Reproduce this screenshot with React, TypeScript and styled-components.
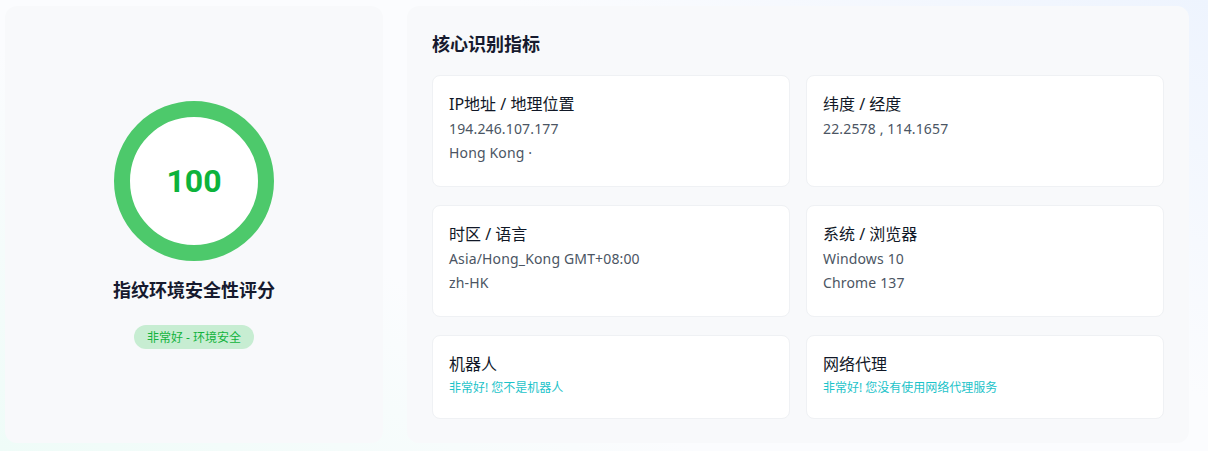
import React from "react";
import styled, { createGlobalStyle } from "styled-components";

const GlobalStyle = createGlobalStyle`
  html, body { margin: 0; padding: 0; }
  body {
    width: 1208px;
    height: 451px;
    overflow: hidden;
    font-family: "Noto Sans", "Noto Sans CJK SC", sans-serif;
    background: linear-gradient(30deg, #effcf8 0%, #fbfcfe 35%, #fbfcfe 65%, #eef4fe 100%);
  }
`;

const Page = styled.div`
  display: grid;
  grid-template-columns: 378px 782px;
  column-gap: 24px;
  padding: 6px 0 0 5px;
  height: 437px;
`;

const ScoreCard = styled.section`
  background: #f8f9fb;
  border-radius: 12px;
  display: flex;
  flex-direction: column;
  align-items: center;
  justify-content: center;
  padding-top: 1px;
`;

const Ring = styled.div`
  width: 160px;
  height: 160px;
  box-sizing: border-box;
  border-radius: 50%;
  border: 16px solid #4dc96b;
  background: #ffffff;
  display: flex;
  align-items: center;
  justify-content: center;
`;

const Score = styled.span`
  font-family: Roboto, "Noto Sans", sans-serif;
  font-size: 32px;
  font-weight: 700;
  color: #0db33b;
  line-height: 1;
`;

const ScoreTitle = styled.h2`
  margin: 15px 0 0;
  font-size: 18px;
  line-height: 28px;
  font-weight: 700;
  color: #161a2e;
`;

const Badge = styled.span`
  margin-top: 21px;
  height: 24px;
  width: 120px;
  border-radius: 12px;
  background: #c7edd2;
  color: #12b33c;
  font-size: 12px;
  display: flex;
  align-items: center;
  justify-content: center;
`;

const Panel = styled.section`
  background: #f8f9fb;
  border-radius: 12px;
  padding: 25px 25px 24px;
`;

const PanelTitle = styled.h2`
  margin: 0 0 17px;
  font-size: 18px;
  line-height: 27px;
  font-weight: 700;
  color: #161a2e;
`;

const Grid = styled.div`
  display: grid;
  grid-template-columns: 1fr 1fr;
  column-gap: 16px;
  row-gap: 18px;
`;

const Card = styled.div`
  background: #ffffff;
  border: 1px solid #eff1f4;
  border-radius: 8px;
  padding: 16px 16px 21px;
`;

const CardTitle = styled.div`
  font-size: 16px;
  line-height: 24px;
  color: #111827;
`;

const Values = styled.div`
  margin-top: 1px;
  font-size: 14px;
  line-height: 24px;
  color: #4b5563;
  letter-spacing: 0.15px;
`;

const Note = styled.div`
  margin-top: 2px;
  font-size: 12px;
  line-height: 19px;
  color: #1cc3c9;
`;

type Item = { title: string; values?: string[]; note?: string };

const items: Item[] = [
  { title: "IP地址 / 地理位置", values: ["194.246.107.177", "Hong Kong ·"] },
  { title: "纬度 / 经度", values: ["22.2578 , 114.1657", "\u00a0"] },
  { title: "时区 / 语言", values: ["Asia/Hong_Kong GMT+08:00", "zh-HK"] },
  { title: "系统 / 浏览器", values: ["Windows 10", "Chrome 137"] },
  { title: "机器人", note: "非常好! 您不是机器人" },
  { title: "网络代理", note: "非常好! 您没有使用网络代理服务" },
];

export default function App() {
  return (
    <>
      <GlobalStyle />
      <Page>
        <ScoreCard>
          <Ring>
            <Score>100</Score>
          </Ring>
          <ScoreTitle>指纹环境安全性评分</ScoreTitle>
          <Badge>非常好 - 环境安全</Badge>
        </ScoreCard>
        <Panel>
          <PanelTitle>核心识别指标</PanelTitle>
          <Grid>
            {items.map((it) => (
              <Card key={it.title}>
                <CardTitle>{it.title}</CardTitle>
                {it.values && (
                  <Values>
                    {it.values.map((v, i) => (
                      <div key={i}>{v}</div>
                    ))}
                  </Values>
                )}
                {it.note && <Note>{it.note}</Note>}
              </Card>
            ))}
          </Grid>
        </Panel>
      </Page>
    </>
  );
}
